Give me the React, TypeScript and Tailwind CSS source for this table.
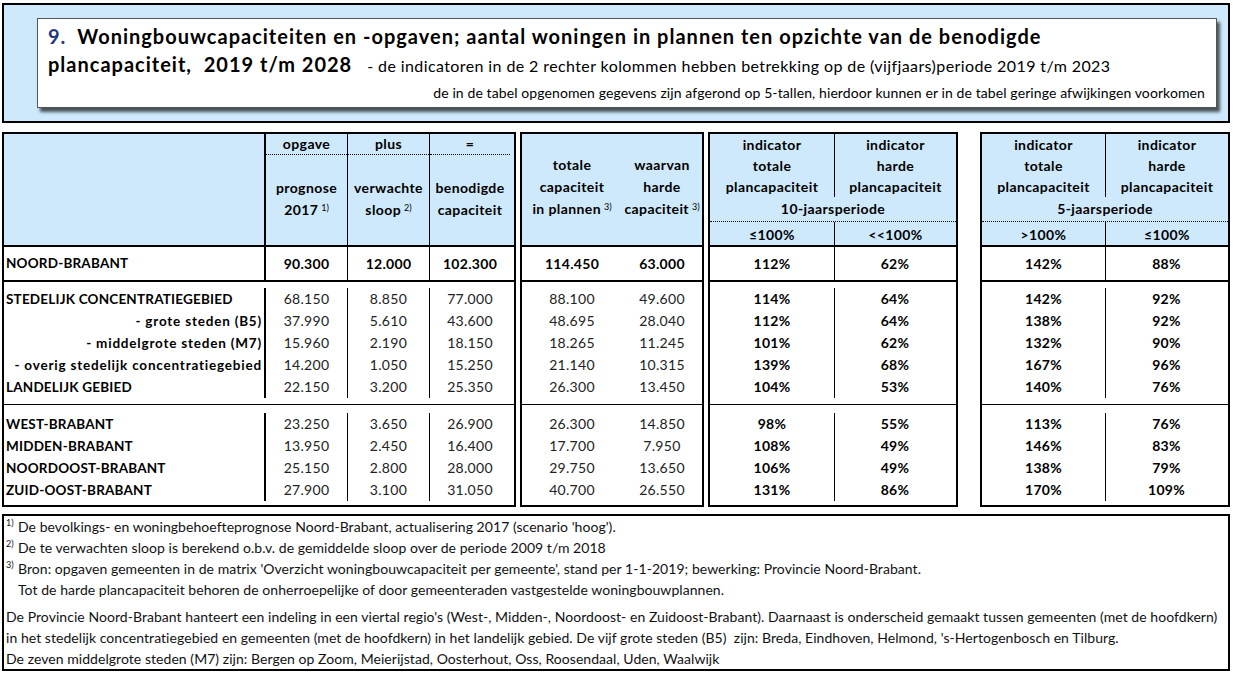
const blue = "bg-[#cde9fb]";

type Row = { label: string; align: "left" | "right"; values: string[] };

const nb: Row = {
  label: "NOORD-BRABANT",
  align: "left",
  values: ["90.300", "12.000", "102.300", "114.450", "63.000", "112%", "62%", "142%", "88%"],
};

const group2: Row[] = [
  { label: "STEDELIJK CONCENTRATIEGEBIED", align: "left", values: ["68.150", "8.850", "77.000", "88.100", "49.600", "114%", "64%", "142%", "92%"] },
  { label: "- grote steden (B5)", align: "right", values: ["37.990", "5.610", "43.600", "48.695", "28.040", "112%", "64%", "138%", "92%"] },
  { label: "- middelgrote steden (M7)", align: "right", values: ["15.960", "2.190", "18.150", "18.265", "11.245", "101%", "62%", "132%", "90%"] },
  { label: "- overig stedelijk concentratiegebied", align: "right", values: ["14.200", "1.050", "15.250", "21.140", "10.315", "139%", "68%", "167%", "96%"] },
  { label: "LANDELIJK GEBIED", align: "left", values: ["22.150", "3.200", "25.350", "26.300", "13.450", "104%", "53%", "140%", "76%"] },
];

const group3: Row[] = [
  { label: "WEST-BRABANT", align: "left", values: ["23.250", "3.650", "26.900", "26.300", "14.850", "98%", "55%", "113%", "76%"] },
  { label: "MIDDEN-BRABANT", align: "left", values: ["13.950", "2.450", "16.400", "17.700", "7.950", "108%", "49%", "146%", "83%"] },
  { label: "NOORDOOST-BRABANT", align: "left", values: ["25.150", "2.800", "28.000", "29.750", "13.650", "106%", "49%", "138%", "79%"] },
  { label: "ZUID-OOST-BRABANT", align: "left", values: ["27.900", "3.100", "31.050", "40.700", "26.550", "131%", "86%", "170%", "109%"] },
];

type Col = { w: string; sep: string; idx: number };

const sepThick = "border-l-2 border-black";
const sepThin = "border-l border-black";

const colsA: Col[] = [
  { w: "w-[260px]", sep: "", idx: -1 },
  { w: "w-[83px]", sep: sepThick, idx: 0 },
  { w: "w-[82px]", sep: sepThin, idx: 1 },
  { w: "w-[81px]", sep: sepThin, idx: 2 },
];
const colsB: Col[] = [
  { w: "w-[100px]", sep: "", idx: 3 },
  { w: "w-[80px]", sep: "", idx: 4 },
];
const colsC: Col[] = [
  { w: "w-[124px]", sep: "", idx: 5 },
  { w: "w-[121px]", sep: sepThin, idx: 6 },
];
const colsD: Col[] = [
  { w: "w-[123px]", sep: "", idx: 7 },
  { w: "w-[122px]", sep: sepThin, idx: 8 },
];

function Sup({ n }: { n: number }) {
  return <sup className="ml-[3px] text-[9px] font-normal tracking-normal">{n})</sup>;
}

function Cell({ row, idx, strong, h }: { row: Row; idx: number; strong: boolean; h: string }) {
  if (idx < 0) {
    return (
      <div
        className={`${h} whitespace-nowrap px-[2px] text-[13.5px] font-bold text-black ${
          row.align === "right" ? "text-right tracking-[0.8px]" : "text-left tracking-[0.2px]"
        }`}
      >
        {row.label}
      </div>
    );
  }
  const pct = idx >= 5;
  return (
    <div
      className={`${h} text-center text-[14px] tracking-[0.3px] ${pct || strong ? "font-bold text-black" : "font-normal text-[#222]"}`}
    >
      {row.values[idx]}
    </div>
  );
}

function Section({ cols, rows, className, strong, h }: { cols: Col[]; rows: Row[]; className: string; strong?: boolean; h: string }) {
  return (
    <div className={`flex ${className}`}>
      {cols.map((c, i) => (
        <div key={i} className={`${c.w} ${c.sep} flex shrink-0 flex-col`}>
          {rows.map((r, j) => (
            <Cell key={j} row={r} idx={c.idx} strong={!!strong} h={h} />
          ))}
        </div>
      ))}
    </div>
  );
}

function Body({ cols }: { cols: Col[] }) {
  return (
    <>
      <Section cols={cols} rows={[nb]} strong h="h-[33px] leading-[33px]" className="border-b-2 border-black" />
      <Section cols={cols} rows={group2} h="h-[22px] leading-[22px]" className="border-b border-black pt-[6px] pb-[6px]" />
      <Section cols={cols} rows={group3} h="h-[22px] leading-[22px]" className="pt-[8px] pb-[4px]" />
    </>
  );
}

function HeadA() {
  const cols: { w: string; sep: string; top: string; lines: React.ReactNode[] }[] = [
    { w: "w-[83px]", sep: sepThick, top: "opgave", lines: ["prognose", <>2017<Sup n={1} /></>] },
    { w: "w-[82px]", sep: sepThin, top: "plus", lines: ["verwachte", <>sloop<Sup n={2} /></>] },
    { w: "w-[81px]", sep: sepThin, top: "=", lines: ["benodigde", "capaciteit"] },
  ];
  return (
    <div className={`flex h-[113px] border-b-2 border-black ${blue}`}>
      <div className="w-[260px] shrink-0" />
      {cols.map((c, i) => (
        <div key={i} className={`${c.w} ${c.sep} flex shrink-0 flex-col`}>
          <div className="h-[21px] border-b border-dotted border-black text-center leading-[20px]">{c.top}</div>
          <div className="h-[22px]" />
          {c.lines.map((l, j) => (
            <div key={j} className="h-[22px] whitespace-nowrap text-center leading-[22px]">
              {l}
            </div>
          ))}
        </div>
      ))}
    </div>
  );
}

function HeadB() {
  return (
    <div className={`flex h-[113px] border-b-2 border-black pt-[20px] ${blue}`}>
      <div className="flex w-[100px] shrink-0 flex-col text-center leading-[22px]">
        <div>totale</div>
        <div>capaciteit</div>
        <div className="whitespace-nowrap">
          in plannen<Sup n={3} />
        </div>
      </div>
      <div className="flex w-[80px] shrink-0 flex-col text-center leading-[22px]">
        <div>waarvan</div>
        <div>harde</div>
        <div className="whitespace-nowrap">
          capaciteit<Sup n={3} />
        </div>
      </div>
    </div>
  );
}

function HeadIndicator({ w1, w2, period, p1, p2 }: { w1: string; w2: string; period: string; p1: string; p2: string }) {
  return (
    <div className={`flex h-[113px] flex-col border-b-2 border-black ${blue}`}>
      <div className="flex h-[63px]">
        <div className={`${w1} shrink-0 text-center leading-[21px]`}>
          <div>indicator</div>
          <div>totale</div>
          <div>plancapaciteit</div>
        </div>
        <div className={`${w2} shrink-0 border-l border-black text-center leading-[21px]`}>
          <div>indicator</div>
          <div>harde</div>
          <div>plancapaciteit</div>
        </div>
      </div>
      <div className="h-[25px] border-b border-dotted border-black text-center leading-[24px]">{period}</div>
      <div className="flex h-[25px]">
        <div className={`${w1} shrink-0 text-center leading-[25px]`}>{p1}</div>
        <div className={`${w2} shrink-0 border-l border-black text-center leading-[25px]`}>{p2}</div>
      </div>
    </div>
  );
}

function Footer() {
  return (
    <div className="mt-[7px] h-[157px] w-[1228px] whitespace-nowrap border-2 border-black pl-[2px] text-[14px] leading-[21px] tracking-[0.05px] text-[#111]">
      <div>
        <span className="inline-block w-[12px] align-top text-[9px] leading-[13px]">1)</span>
        De bevolkings- en woningbehoefteprognose Noord-Brabant, actualisering 2017 (scenario 'hoog').
      </div>
      <div>
        <span className="inline-block w-[12px] align-top text-[9px] leading-[13px]">2)</span>
        De te verwachten sloop is berekend o.b.v. de gemiddelde sloop over de periode 2009 t/m 2018
      </div>
      <div>
        <span className="inline-block w-[12px] align-top text-[9px] leading-[13px]">3)</span>
        Bron: opgaven gemeenten in de matrix 'Overzicht woningbouwcapaciteit per gemeente', stand per 1-1-2019; bewerking: Provincie Noord-Brabant.
      </div>
      <div className="pl-[12px]">
        Tot de harde plancapaciteit behoren de onherroepelijke of door gemeenteraden vastgestelde woningbouwplannen.
      </div>
      <div className="mt-[6px]">
        De Provincie Noord-Brabant hanteert een indeling in een viertal regio's (West-, Midden-, Noordoost- en Zuidoost-Brabant). Daarnaast is onderscheid gemaakt tussen gemeenten (met de hoofdkern)
      </div>
      <div>
        in het stedelijk concentratiegebied en gemeenten (met de hoofdkern) in het landelijk gebied. De vijf grote steden (B5)&nbsp; zijn: Breda, Eindhoven, Helmond, 's-Hertogenbosch en Tilburg.
      </div>
      <div>De zeven middelgrote steden (M7) zijn: Bergen op Zoom, Meierijstad, Oosterhout, Oss, Roosendaal, Uden, Waalwijk</div>
    </div>
  );
}

export default function App() {
  return (
    <div className="min-h-screen bg-white pl-[2px] pt-[3px] font-['Lato',sans-serif] text-black">
      {/* title */}
      <div className={`h-[120px] w-[1228px] border-2 border-black pl-[33px] pr-[11px] pt-[13px] ${blue}`}>
        <div className="h-[90px] border border-[#555] bg-white pl-[10px] pr-[11px] pt-[3px] shadow-[3px_4px_3px_rgba(0,0,0,0.65)]">
          <div className="whitespace-nowrap text-[20px] font-bold leading-[28px] tracking-[1px]">
            <span className="mr-[11px] text-[#1f3583]">9.</span>
            Woningbouwcapaciteiten en -opgaven; aantal woningen in plannen ten opzichte van de benodigde
          </div>
          <div className="flex items-baseline whitespace-nowrap leading-[28px]">
            <span className="text-[20px] font-bold tracking-[1px]">plancapaciteit,&nbsp; 2019 t/m 2028</span>
            <span className="ml-[15px] text-[16px] tracking-[0.4px]">
              - de indicatoren in de 2 rechter kolommen hebben betrekking op de (vijfjaars)periode 2019 t/m 2023
            </span>
          </div>
          <div className="mt-[3px] whitespace-nowrap text-right text-[14px] leading-[20px] tracking-[0.1px]">
            de in de tabel opgenomen gegevens zijn afgerond op 5-tallen, hierdoor kunnen er in de tabel geringe afwijkingen voorkomen
          </div>
        </div>
      </div>

      {/* table */}
      <div className="mt-[9px] flex text-[14px] font-bold tracking-[0.4px]">
        <div className="flex w-[514px] shrink-0 flex-col border-2 border-black">
          <HeadA />
          <Body cols={colsA} />
        </div>
        <div className="ml-[4px] flex w-[184px] shrink-0 flex-col border-2 border-black">
          <HeadB />
          <Body cols={colsB} />
        </div>
        <div className="ml-[4px] flex w-[250px] shrink-0 flex-col border-2 border-black">
          <HeadIndicator w1="w-[124px]" w2="w-[122px]" period="10-jaarsperiode" p1="≤100%" p2="<<100%" />
          <Body cols={colsC} />
        </div>
        <div className="ml-[22px] flex w-[250px] shrink-0 flex-col border-2 border-black">
          <HeadIndicator w1="w-[123px]" w2="w-[123px]" period="5-jaarsperiode" p1=">100%" p2="≤100%" />
          <Body cols={colsD} />
        </div>
      </div>

      <Footer />
    </div>
  );
}
